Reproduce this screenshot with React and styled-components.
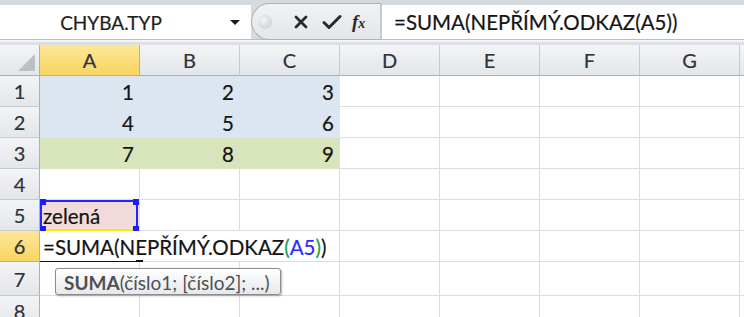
import React from "react";
import styled, { createGlobalStyle, css } from "styled-components";

const GlobalStyle = createGlobalStyle`
  html, body {
    margin: 0;
    padding: 0;
    background: #fff;
    overflow: hidden;
  }
  body {
    font-family: Lato, "Open Sans", sans-serif;
  }
`;

const FILLS = {
  blue: "#dce6f1",
  green: "#d8e4bc",
  pink: "#f2dcdb",
};

const COLUMNS = ["A", "B", "C", "D", "E", "F", "G"];

const data = [
  { n: 1, cells: [["1", "blue"], ["2", "blue"], ["3", "blue"]] },
  { n: 2, cells: [["4", "blue"], ["5", "blue"], ["6", "blue"]] },
  { n: 3, cells: [["7", "green"], ["8", "green"], ["9", "green"]] },
  { n: 4, cells: [] },
];

export default function App() {
  return (
    <Window>
      <GlobalStyle />
      <Toolbar>
        <NameBox>
          <NameText>CHYBA.TYP</NameText>
          <Caret />
        </NameBox>
        <FxArea>
          <Grip />
          <IconButton>
            <svg width="16" height="16" viewBox="0 0 16 16">
              <path d="M3 3 L13 13 M13 3 L3 13" stroke="#2a2a2a" strokeWidth="2.8" strokeLinecap="round" />
            </svg>
          </IconButton>
          <IconButton>
            <svg width="20" height="16" viewBox="0 0 20 16">
              <path d="M2 8.5 L7 13.5 L18 2.5" stroke="#2a2a2a" strokeWidth="3" fill="none" strokeLinejoin="round" strokeLinecap="round" />
            </svg>
          </IconButton>
          <FxLabel>
            f<small>x</small>
          </FxLabel>
        </FxArea>
        <FormulaInput>=SUMA(NEPŘÍMÝ.ODKAZ(A5))</FormulaInput>
      </Toolbar>

      <Sheet>
        <Corner />
        {COLUMNS.map((c) => (
          <ColHead key={c} $active={c === "A"}>
            {c}
          </ColHead>
        ))}
        <ColHead />

        {data.map((row) => (
          <React.Fragment key={row.n}>
            <RowHead>{row.n}</RowHead>
            {COLUMNS.map((c, i) => {
              const cell = row.cells[i];
              return cell ? (
                <Cell key={c} $fill={FILLS[cell[1]]} $number>
                  {cell[0]}
                </Cell>
              ) : (
                <Cell key={c} />
              );
            })}
            <Cell />
          </React.Fragment>
        ))}

        <RowHead>5</RowHead>
        <Cell $fill={FILLS.pink}>
          zelená
          <Selection>
            <Handle $top $left />
            <Handle $top />
            <Handle $left />
            <Handle />
          </Selection>
        </Cell>
        {COLUMNS.slice(1).map((c) => (
          <Cell key={c} />
        ))}
        <Cell />

        <RowHead $active>6</RowHead>
        <FormulaCell>
          =SUMA(NEPŘÍMÝ.ODKAZ<Paren>(</Paren>
          <Ref>A5</Ref>
          <Paren>)</Paren>)
          <ActiveEdge />
        </FormulaCell>
        {COLUMNS.slice(3).map((c) => (
          <Cell key={c} />
        ))}
        <Cell />

        {[7, 8].map((n) => (
          <React.Fragment key={n}>
            <RowHead>{n}</RowHead>
            {COLUMNS.map((c) => (
              <Cell key={c} />
            ))}
            <Cell />
          </React.Fragment>
        ))}

        <Tooltip>
          <b>SUMA</b>(číslo1; [číslo2]; ...)
        </Tooltip>
      </Sheet>
    </Window>
  );
}

const Window = styled.div`
  width: 744px;
  height: 317px;
  overflow: hidden;
  background: #fff;
`;

const Toolbar = styled.div`
  display: flex;
  align-items: flex-start;
  height: 45px;
  box-sizing: border-box;
  padding-top: 5px;
  background: linear-gradient(
    to bottom,
    #d5dae0 0,
    #d5dae0 39px,
    #b7bdc4 39px,
    #b7bdc4 40px,
    #f3f4f6 40px,
    #f3f4f6 42px,
    #dcdfe3 42px
  );
`;

const NameBox = styled.div`
  display: flex;
  align-items: center;
  width: 251px;
  height: 34px;
  background: #fff;
`;

const NameText = styled.span`
  flex: 0 0 222px;
  text-align: center;
  font-size: 19px;
  color: #1e1e1e;
  -webkit-text-stroke: 0.2px #1e1e1e;
`;

const Caret = styled.span`
  margin-left: 8px;
  width: 0;
  height: 0;
  border-left: 5px solid transparent;
  border-right: 5px solid transparent;
  border-top: 5px solid #1e1e1e;
`;

const FxArea = styled.div`
  display: flex;
  align-items: center;
  width: 131px;
  box-sizing: border-box;
  margin-top: -2px;
  height: 37px;
  padding-left: 6px;
  border: 1px solid #aab2bb;
  border-right: 2px solid #c4c9cf;
  border-radius: 19px 0 0 19px;
  background: linear-gradient(to bottom, #f1f2f4, #e3e6ea);
`;

const Grip = styled.span`
  width: 14px;
  height: 14px;
  border-radius: 50%;
  background: radial-gradient(circle at 40% 35%, #f4f5f6, #c3c7cc);
  margin-right: 13px;
`;

const IconButton = styled.span`
  display: flex;
  align-items: center;
  justify-content: center;
  width: 31px;
  height: 30px;
`;

const FxLabel = styled.span`
  margin-left: 5px;
  font-family: "Liberation Serif", "DejaVu Serif", serif;
  font-style: italic;
  font-weight: bold;
  font-size: 19px;
  color: #2a2a2a;
  small {
    font-size: 14px;
  }
`;

const FormulaInput = styled.div`
  flex: 1;
  height: 34px;
  display: flex;
  align-items: center;
  padding-left: 12px;
  background: #fff;
  font-size: 20.5px;
  color: #141414;
  -webkit-text-stroke: 0.2px #141414;
  white-space: nowrap;
`;

const Sheet = styled.div`
  position: relative;
  display: grid;
  grid-template-columns: 40px repeat(8, 100px);
  grid-template-rows: repeat(7, 31px) 34px 31px;
  font-size: 20.5px;
  color: #141414;
`;

const headBase = css`
  display: flex;
  align-items: center;
  justify-content: center;
  box-sizing: border-box;
  color: #2e3238;
  font-size: 20px;
  -webkit-text-stroke: 0.2px #2e3238;
  background: linear-gradient(to bottom, #f3f4f6, #e3e6ea);
`;

const Corner = styled.div`
  ${headBase};
  position: relative;
  border-right: 1px solid #a9b0b8;
  border-bottom: 1px solid #a9b0b8;
  &::after {
    content: "";
    position: absolute;
    right: 4px;
    bottom: 4px;
    border-left: 17px solid transparent;
    border-bottom: 17px solid #bcc0c5;
  }
`;

const activeHead = css`
  background: linear-gradient(to bottom, #fde797, #f8d462);
  border-color: #e0ad3c;
`;

const ColHead = styled.div`
  ${headBase};
  border-right: 1px solid #c6cad0;
  border-bottom: 1px solid #a9b0b8;
  ${(p) => p.$active && activeHead};
`;

const RowHead = styled.div`
  ${headBase};
  border-right: 1px solid #a9b0b8;
  border-bottom: 1px solid #c6cad0;
  ${(p) => p.$active && activeHead};
`;

const Cell = styled.div`
  position: relative;
  display: flex;
  align-items: center;
  justify-content: ${(p) => (p.$number ? "flex-end" : "flex-start")};
  box-sizing: border-box;
  padding: 2px ${(p) => (p.$number ? "5px" : "3px")} 0;
  background: ${(p) => p.$fill || "#fff"};
  border-right: 1px solid ${(p) => p.$fill || "#dadcdd"};
  border-bottom: 1px solid ${(p) => p.$fill || "#dadcdd"};
  white-space: nowrap;
  -webkit-text-stroke: 0.2px #141414;
`;

const FormulaCell = styled(Cell)`
  grid-column: span 3;
  overflow: visible;
`;

const Paren = styled.span`
  color: #17a34a;
  -webkit-text-stroke: 0.2px #17a34a;
`;

const Ref = styled.span`
  color: #2b2bff;
  -webkit-text-stroke: 0.2px #2b2bff;
`;

const Selection = styled.span`
  position: absolute;
  left: 0;
  top: 0;
  right: 1px;
  bottom: -1px;
  border: 2px solid #2424ff;
  border-bottom-color: #f5f000;
  pointer-events: none;
`;

const Handle = styled.span`
  position: absolute;
  width: 6px;
  height: 6px;
  background: #1c1cff;
  ${(p) => (p.$top ? "top: -3px;" : "bottom: -3px;")}
  ${(p) => (p.$left ? "left: -2px;" : "right: -3px;")}
`;

const ActiveEdge = styled.span`
  position: absolute;
  left: 0;
  top: 100%;
  width: 96px;
  height: 2px;
  background: #111;
  &::after {
    content: "";
    position: absolute;
    left: 96px;
    top: -1px;
    width: 7px;
    height: 5px;
    background: #111;
  }
`;

const Tooltip = styled.div`
  position: absolute;
  left: 55px;
  top: 223px;
  width: 226px;
  height: 27px;
  box-sizing: border-box;
  display: flex;
  align-items: center;
  padding: 1px 8px 0;
  border: 1px solid #8c8c8c;
  border-radius: 3px;
  background: linear-gradient(to bottom, #ffffff, #e7e8ef);
  box-shadow: 1px 1px 2px rgba(0, 0, 0, 0.3);
  font-size: 19px;
  color: #4f4f4f;
  white-space: nowrap;
  b {
    font-weight: bold;
  }
`;
